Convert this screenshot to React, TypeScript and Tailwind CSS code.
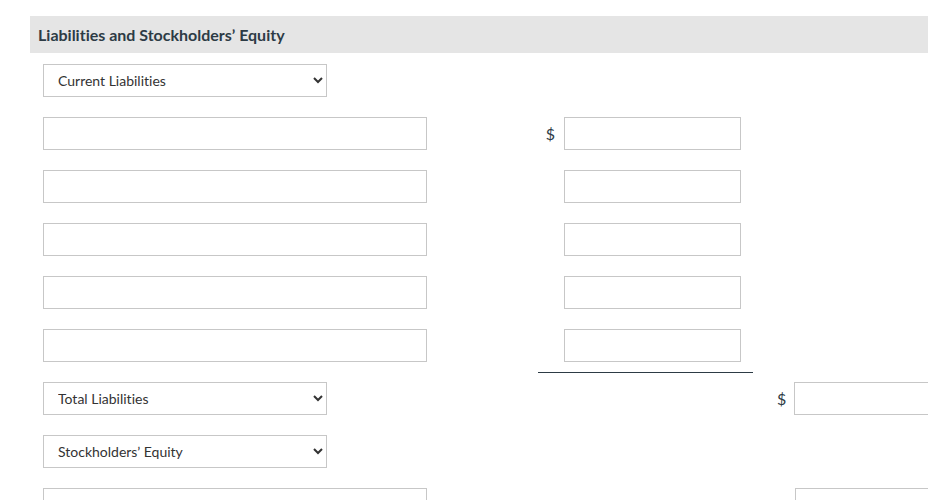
export default function App() {
  const rows = [0, 1, 2, 3, 4];
  return (
    <div className="bg-white min-h-[500px] pt-4 pl-[30px] font-['Lato','Liberation_Sans',sans-serif] text-[#2d3b45] [font-variant-ligatures:none]">
      <div className="w-[898px] overflow-hidden">
        <div className="h-[37px] bg-[#e5e5e5] flex items-center px-2">
          <h2 className="text-[16px] font-bold">Liabilities and Stockholders’ Equity</h2>
        </div>
        <div className="flex flex-col gap-5 pt-[11px] pl-[13px] h-[447px]">
          <div className="h-[33px] flex items-center">
            <select className="w-[284px] h-[33px] border border-[#c7c7c7] bg-white pl-[10px] pr-1 text-[14px] text-[#333]">
              <option>Current Liabilities</option>
            </select>
          </div>
          {rows.map((i) => (
            <div key={i} className="h-[33px] grid grid-cols-[495px_215px_1fr] shrink-0">
              <input className="w-[384px] h-[33px] border border-[#c7c7c7] bg-white" />
              <div className="relative flex items-center justify-end pr-3">
                {i === 0 && <span className="mr-[9px] text-[16px]">$</span>}
                <input className="w-[177px] h-[33px] border border-[#c7c7c7] bg-white" />
                {i === 4 && <div className="absolute left-0 right-0 -bottom-[11px] h-px bg-[#2d3b45]" />}
              </div>
              <div />
            </div>
          ))}
          <div className="h-[33px] grid grid-cols-[710px_1fr] shrink-0">
            <select className="w-[284px] h-[33px] border border-[#c7c7c7] bg-white pl-[10px] pr-1 text-[14px] text-[#333]">
              <option>Total Liabilities</option>
            </select>
            <div className="flex items-center pl-[24px]">
              <span className="mr-[8px] text-[16px]">$</span>
              <input className="w-[200px] shrink-0 h-[33px] border border-[#c7c7c7] bg-white" />
            </div>
          </div>
          <div className="h-[33px] flex items-center shrink-0">
            <select className="w-[284px] h-[33px] border border-[#c7c7c7] bg-white pl-[10px] pr-1 text-[14px] text-[#333]">
              <option>Stockholders’ Equity</option>
            </select>
          </div>
          <div className="h-[33px] grid grid-cols-[710px_1fr] shrink-0">
            <input className="w-[384px] h-[33px] border border-[#c7c7c7] bg-white" />
            <div className="flex items-center pl-[42px]">
              <input className="w-[200px] shrink-0 h-[33px] border border-[#c7c7c7] bg-white" />
            </div>
          </div>
        </div>
      </div>
    </div>
  );
}
